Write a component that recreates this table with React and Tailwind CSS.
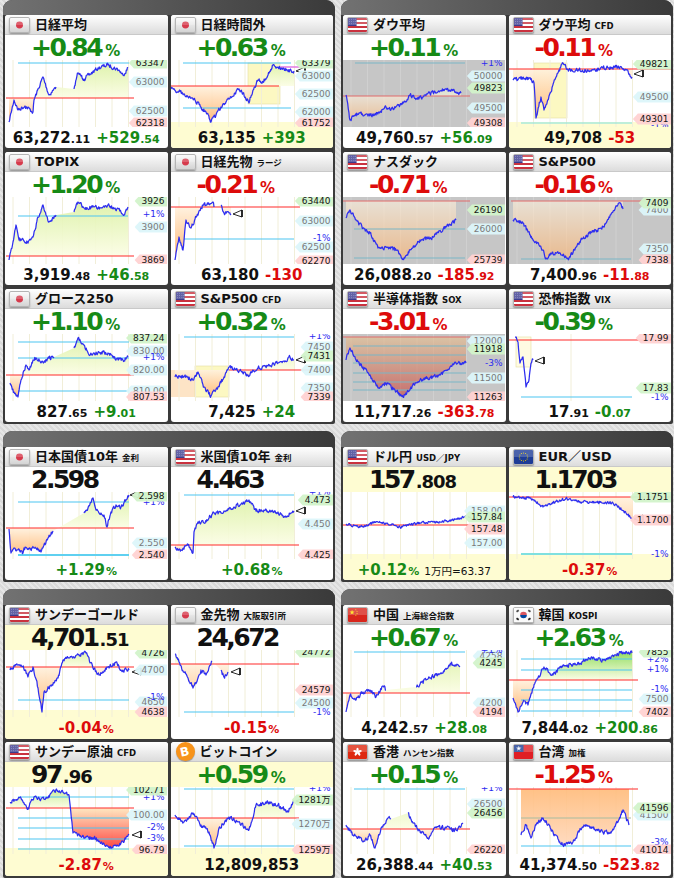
import React from "react"

const colOf = (c) => (c === "g" ? "text-[#168a16]" : c === "r" ? "text-[#dd0b0b]" : "text-[#111]")

function rng(seed) {
  let s = seed % 2147483647
  if (s <= 0) s += 2147483646
  return () => {
    s = (s * 16807) % 2147483647
    return (s - 1) / 2147483646
  }
}

// keypoints -> jagged price line
function buildSeries(line, amp, seed) {
  const r = rng(seed)
  let n = 0
  return line.map((seg) => {
    const out = []
    for (let i = 0; i < seg.length - 1; i++) {
      const [x0, y0] = seg[i]
      const [x1, y1] = seg[i + 1]
      const steps = Math.max(1, Math.ceil((x1 - x0) / 0.6))
      for (let k = 0; k < steps; k++) {
        const t = k / steps
        n = n * 0.35 + (r() - 0.5) * 2 * amp
        const y = y0 + (y1 - y0) * t + (k === 0 ? 0 : n)
        out.push([x0 + (x1 - x0) * t, Math.max(0.6, Math.min(66.4, y))])
      }
    }
    out.push(seg[seg.length - 1])
    return out
  })
}

const CW = { ".": 2.86, ",": 2.86, "%": 8.55, "+": 7.54, "-": 3.25, "万": 9 }
const textW = (t) => [...t].reduce((a, ch) => a + (CW[ch] ?? 5.72), 0)

function Label({ t, y, k }) {
  const right = 159.5
  if (k === "p")
    return (
      <text x={right} y={y + 3.2} textAnchor="end" fontSize="9" fill="#2b2bf0">
        {t}
      </text>
    )
  const L = right - textW(t) - 2
  const fillC = k === "h" ? "#d2f3ca" : k === "l" ? "#ffd2d2" : "#dcf5fa"
  return (
    <g>
      <polygon points={`${L - 5},${y} ${L},${y - 5.5} 162,${y - 5.5} 162,${y + 5.5} ${L},${y + 5.5}`} fill={fillC} opacity="0.95" />
      <text x={right} y={y + 3.2} textAnchor="end" fontSize="9" fill={k === "s" ? "#7a7a7a" : "#151515"}>
        {t}
      </text>
    </g>
  )
}

const ORDER = { s: 0, p: 1, h: 2, l: 3 }

function Chart({ ch, id }) {
  const W = 162
  const H = 67
  const segs = buildSeries(ch.line, ch.amp ?? 1.8, id * 131 + 7)
  const all = segs.flat()
  const ref = ch.red
  const x0 = all[0][0]
  const x1 = all[all.length - 1][0]
  const pts = all.map((p) => `${p[0].toFixed(1)},${p[1].toFixed(1)}`).join(" ")
  const fill = `${x0},${ref} ${pts} ${x1},${ref}`
  const gray = ch.gray
  const grid = ch.grid ?? [8, 24.5, 41, 57.5, 74, 90.5, 107, 123.5]
  const labels = [...ch.labels].sort((a, b) => ORDER[a[2]] - ORDER[b[2]])
  return (
    <svg className="block w-full h-[67px]" viewBox={`0 0 ${W} ${H}`} preserveAspectRatio="xMinYMin meet">
      <defs>
        <linearGradient id={`pg${id}`} gradientUnits="userSpaceOnUse" x1="0" y1={ref} x2="0" y2="0">
          <stop offset="0" stopColor={ch.posBot ?? "#fbfde4"} />
          <stop offset="1" stopColor={ch.posTop ?? "#d9f0a0"} />
        </linearGradient>
        <linearGradient id={`ng${id}`} gradientUnits="userSpaceOnUse" x1="0" y1={ref} x2="0" y2={H}>
          <stop offset="0" stopColor={ch.negTop ?? "#fff1dd"} />
          <stop offset="1" stopColor={ch.negBot ?? "#ffad62"} />
        </linearGradient>
        <clipPath id={`ca${id}`}>
          <rect x="0" y="0" width={W} height={ref} />
        </clipPath>
        <clipPath id={`cb${id}`}>
          <rect x="0" y={ref} width={W} height={H - ref} />
        </clipPath>
      </defs>
      {gray && <rect width={W} height={H} fill="#c6c6c6" />}
      {ch.yb && <rect y={ch.yb} width={W} height={H - ch.yb} fill="#fefcd2" />}
      {(ch.peach || []).map((r, i) => (
        <rect key={i} x={r[0]} y={r[1]} width={r[2]} height={r[3]} fill="#fde4c6" />
      ))}
      {(ch.rects || []).map((r, i) => (
        <rect key={i} x={r[0]} y={r[1]} width={r[2]} height={r[3]} fill={r[4] ?? "#fcf8c2"} stroke="#e4dea0" strokeWidth="0.6" />
      ))}
      {grid.map((x) => (
        <line key={x} x1={x} x2={x} y1="0" y2={H} stroke={gray ? "#d0d0d0" : "#f1eed8"} strokeWidth="1" />
      ))}
      {!ch.noFill && (
        <>
          <polygon points={fill} fill={`url(#pg${id})`} clipPath={`url(#ca${id})`} opacity={gray ? 0.55 : 0.92} />
          <polygon points={fill} fill={`url(#ng${id})`} clipPath={`url(#cb${id})`} opacity={gray ? 0.6 : 0.92} />
        </>
      )}
      {(ch.blues || []).map(([y, a, b, col, w], i) => (
        <line key={i} x1={a} x2={b} y1={y} y2={y} stroke={col ?? (gray ? "#7ab6c6" : "#4cc6f2")} strokeWidth={w ?? 1.1} />
      ))}
      {(ch.extra || []).map(([y, a, b, col], i) => (
        <line key={i} x1={a} x2={b} y1={y} y2={y} stroke={col} strokeWidth="1.4" />
      ))}
      <line x1={ch.redX[0]} x2={ch.redX[1]} y1={ref} y2={ref} stroke={gray ? "#e06a6a" : "#ff2a2a"} strokeWidth="1.2" />
      {segs.map((s, i) => (
        <polyline
          key={i}
          points={s.map((p) => `${p[0].toFixed(1)},${p[1].toFixed(1)}`).join(" ")}
          fill="none"
          stroke="#2e2ef0"
          strokeWidth="1.25"
          strokeLinejoin="round"
        />
      ))}
      {ch.marker && (
        <g>
          <path
            d={`M${ch.marker[0]} ${ch.marker[1]} L${ch.marker[0] + 9} ${ch.marker[1] - 4} L${ch.marker[0] + 9} ${ch.marker[1] + 3} Z`}
            fill="#fff"
            stroke="#111"
            strokeWidth="0.9"
          />
          <line x1={ch.marker[0] + 9} x2={ch.marker[0] + 9} y1={ch.marker[1] - 4} y2={ch.marker[1] + 3} stroke="#111" strokeWidth="1.6" />
        </g>
      )}
      {labels.map(([t, y, k], i) => (
        <Label key={i} t={t} y={y} k={k} />
      ))}
    </svg>
  )
}

function star(cx, cy, r, rot = 0) {
  const pts = []
  for (let i = 0; i < 10; i++) {
    const a = -Math.PI / 2 + rot + (i * Math.PI) / 5
    const rr = i % 2 === 0 ? r : r * 0.4
    pts.push(`${(cx + rr * Math.cos(a)).toFixed(2)},${(cy + rr * Math.sin(a)).toFixed(2)}`)
  }
  return pts.join(" ")
}

function FlagArt({ kind }) {
  if (kind === "jp") return <circle cx="10.5" cy="8" r="3.9" fill="#d63a4c" />
  if (kind === "us")
    return (
      <>
        <rect width="21" height="16" fill="#fff" />
        {[0, 2, 4, 6].map((i) => (
          <rect key={i} y={(i * 16) / 7} width="21" height={16 / 7} fill="#c9323f" />
        ))}
        <rect width="9.5" height={(16 / 7) * 4} fill="#3b3b8f" />
        {[1.5, 4, 6.5].map((y) =>
          [1.5, 4, 6.5, 8.5].map((x) => <circle key={`${x}-${y}`} cx={x} cy={y} r="0.55" fill="#9a9ad0" />)
        )}
      </>
    )
  if (kind === "eu")
    return (
      <>
        <rect width="21" height="16" fill="#1e3c96" />
        {Array.from({ length: 12 }, (_, i) => {
          const a = (i * Math.PI) / 6
          return <circle key={i} cx={10.5 + 4.6 * Math.cos(a)} cy={8 + 4.6 * Math.sin(a)} r="0.65" fill="#f0d000" />
        })}
      </>
    )
  if (kind === "cn")
    return (
      <>
        <rect width="21" height="16" fill="#d8261c" />
        <polygon points={star(4.5, 5, 3)} fill="#ffde00" />
        <polygon points={star(8.6, 2, 1)} fill="#ffde00" />
        <polygon points={star(10, 4, 1)} fill="#ffde00" />
        <polygon points={star(10, 6.4, 1)} fill="#ffde00" />
        <polygon points={star(8.6, 8.2, 1)} fill="#ffde00" />
      </>
    )
  if (kind === "kr")
    return (
      <>
        <rect width="21" height="16" fill="#fafafa" />
        <path d="M6.8 8 A3.7 3.7 0 0 1 14.2 8 Z" fill="#cd2e3a" />
        <path d="M6.8 8 A3.7 3.7 0 0 0 14.2 8 Z" fill="#0047a0" />
        <rect x="2.5" y="2.5" width="3" height="2" fill="#222" transform="rotate(-35 4 3.5)" />
        <rect x="15.5" y="2.5" width="3" height="2" fill="#222" transform="rotate(35 17 3.5)" />
        <rect x="2.5" y="11.5" width="3" height="2" fill="#222" transform="rotate(35 4 12.5)" />
        <rect x="15.5" y="11.5" width="3" height="2" fill="#222" transform="rotate(-35 17 12.5)" />
      </>
    )
  if (kind === "hk")
    return (
      <>
        <rect width="21" height="16" fill="#de2910" />
        {[0, 72, 144, 216, 288].map((a) => (
          <ellipse key={a} cx="10.5" cy="5.6" rx="1.3" ry="2.5" fill="#fff" transform={`rotate(${a} 10.5 8)`} />
        ))}
      </>
    )
  if (kind === "tw")
    return (
      <>
        <rect width="21" height="16" fill="#e01e24" />
        <rect width="10.5" height="8" fill="#1c3f94" />
        <polygon points={star(5.25, 4, 3.2)} fill="#fff" />
        <circle cx="5.25" cy="4" r="1.6" fill="#fff" stroke="#1c3f94" strokeWidth="0.4" />
      </>
    )
  return null
}

function Flag({ kind }) {
  if (kind === "btc")
    return (
      <div className="w-[19px] h-[19px] rounded-full bg-[#f7931a] flex items-center justify-center shadow-[0_1px_1px_rgba(0,0,0,0.3)] ml-[1px]">
        <span className="text-white text-[12px] font-bold leading-none -rotate-12">B</span>
      </div>
    )
  return (
    <div
      className={`relative w-[21px] h-[16px] rounded-[2px] overflow-hidden border border-[#b4b4b4] shadow-[0_1px_1.5px_rgba(0,0,0,0.35)] ${
        kind === "jp" ? "bg-gradient-to-b from-[#fafafa] to-[#d4d4d4]" : "bg-white"
      }`}
    >
      <svg viewBox="0 0 21 16" className="block w-full h-full" preserveAspectRatio="none">
        <FlagArt kind={kind} />
      </svg>
      <div className="absolute inset-x-0 top-0 h-1/2 bg-white/20" />
    </div>
  )
}

function Header({ flag, title, sub }) {
  return (
    <div className="h-[20px] shrink-0 flex items-center gap-[5px] pl-[4px] bg-gradient-to-b from-white to-[#dcdcdc] border-b border-[#c9c9c9]">
      <Flag kind={flag} />
      <div className="flex items-baseline">
        <span className="text-[13px] font-bold text-[#111] leading-none">{title}</span>
        {sub && <span className="text-[8.5px] font-bold text-[#111] leading-none ml-[4px]">{sub}</span>}
      </div>
    </div>
  )
}

function Big({ t, yellow }) {
  return (
    <div className={`h-[25px] shrink-0 pl-[26px] flex items-baseline font-bold ${colOf(t.c)} ${yellow ? "bg-[#fefcd2]" : ""}`}>
      <span className="text-[25px] leading-[25px] tracking-[-2.5px]">{t.v}</span>
      {t.d && <span className="text-[18px] leading-[25px] tracking-[-1px] ml-[2px]">{t.d}</span>}
      {t.u && <span className="text-[15px] leading-[25px] ml-[4px]">{t.u}</span>}
    </div>
  )
}

function Bottom({ items, yellow }) {
  return (
    <div className={`flex-1 flex items-center justify-center font-bold leading-none ${yellow ? "bg-[#fefcd2]" : ""}`}>
      <div className="flex items-baseline">
        {items.map((it, i) =>
          it.t ? (
            <span key={i} className="text-[10.5px] font-normal text-[#111] ml-[5px]">
              {it.t}
            </span>
          ) : (
            <span key={i} className={`${colOf(it.c)} ${i > 0 ? "ml-[6px]" : ""}`}>
              <span className="text-[15px]">{it.v}</span>
              {it.d && <span className="text-[11px]">{it.d}</span>}
              {it.u && <span className="text-[11px] ml-[1px]">{it.u}</span>}
            </span>
          )
        )}
      </div>
    </div>
  )
}

function Card({ c, id }) {
  return (
    <div className="bg-white rounded-[3px] overflow-hidden flex flex-col">
      <Header flag={c.flag} title={c.title} sub={c.sub} />
      <Big t={c.top} yellow={c.topY} />
      <Chart ch={c.ch} id={id} />
      <Bottom items={c.bot} yellow={!!c.ch.yb} />
    </div>
  )
}

const TOP_L = [
  {
    flag: "jp", title: "日経平均",
    top: { v: "+0.84", u: "%", c: "g" },
    bot: [{ v: "63,272", d: ".11" }, { v: "+529", d: ".54", c: "g" }],
    ch: {
      red: 38, redX: [1, 129], blues: [[3, 13, 124]],
      line: [
        [[4, 62], [9, 40], [13, 50], [20, 46], [28, 52], [29, 40], [38, 17], [44, 35], [51, 27]],
        [[69, 29], [73, 13], [79, 19], [93, 8], [103, 5], [114, 10], [118, 15], [123, 8]],
      ],
      labels: [["63347", 3, "h"], ["63000", 22, "s"], ["62500", 51, "s"], ["62318", 63, "l"]],
    },
  },
  {
    flag: "jp", title: "日経時間外",
    top: { v: "+0.63", u: "%", c: "g" },
    bot: [{ v: "63,135" }, { v: "+393", c: "g" }],
    ch: {
      yb: 62, rects: [[77, 3, 32, 41]], red: 26, redX: [0, 108],
      blues: [[3, 12, 120], [48, 12, 120]], extra: [[7, 109, 162, "#e27ae2"]],
      line: [[[0, 29], [8, 31], [17, 37], [24, 40], [30, 47], [35, 52], [40, 62], [45, 55], [50, 47], [55, 42], [60, 37], [68, 29], [72, 33], [78, 43], [82, 30], [87, 20], [92, 22], [97, 15], [102, 5], [106, 7], [110, 8], [116, 10], [123, 11]]],
      marker: [125, 11],
      labels: [["63379", 3, "h"], ["63000", 16, "s"], ["62500", 34, "s"], ["62000", 52, "s"], ["61752", 63, "l"]],
    },
  },
  {
    flag: "jp", title: "TOPIX",
    top: { v: "+1.20", u: "%", c: "g" },
    bot: [{ v: "3,919", d: ".48" }, { v: "+46", d: ".58", c: "g" }],
    ch: {
      red: 59, redX: [1, 129], blues: [[19, 13, 123]],
      line: [
        [[4, 63], [8, 45], [11, 28], [14, 43], [18, 42], [23, 46], [28, 40], [33, 20], [38, 8], [44, 25], [51, 18]],
        [[69, 15], [73, 5], [79, 11], [89, 10], [96, 11], [103, 8], [110, 11], [116, 15], [119, 18], [123, 10]],
      ],
      labels: [["3926", 4, "h"], ["+1%", 17, "p"], ["3900", 30, "s"], ["3869", 63, "l"]],
    },
  },
  {
    flag: "jp", title: "日経先物", sub: "ラージ",
    top: { v: "-0.21", u: "%", c: "r" },
    bot: [{ v: "63,180" }, { v: "-130", c: "r" }],
    ch: {
      red: 10, redX: [0, 129], blues: [[42, 13, 123]],
      line: [
        [[4, 63], [8, 40], [12, 53], [15, 23], [20, 31], [24, 22], [27, 18], [32, 8], [37, 7], [42, 5], [43, 10]],
        [[50, 8], [53, 16], [60, 17]],
      ],
      marker: [62, 17],
      labels: [["63440", 4, "h"], ["63000", 24, "s"], ["-1%", 41, "p"], ["62500", 50, "s"], ["62270", 64, "l"]],
    },
  },
  {
    flag: "jp", title: "グロース250",
    top: { v: "+1.10", u: "%", c: "g" },
    bot: [{ v: "827", d: ".65" }, { v: "+9", d: ".01", c: "g" }],
    ch: {
      red: 41, redX: [1, 129], blues: [[8, 13, 124], [24, 13, 124], [57, 13, 124]],
      line: [
        [[5, 49], [9, 58], [13, 63], [16, 46], [21, 31], [24, 36], [28, 26], [31, 24], [35, 27], [39, 28], [44, 24], [49, 23]],
        [[69, 14], [73, 4], [79, 11], [84, 21], [94, 18], [103, 19], [109, 24], [118, 26], [123, 23]],
      ],
      labels: [["830.00", 17, "s"], ["+1%", 23, "p"], ["837.24", 4, "h"], ["820.00", 36, "s"], ["810.00", 57, "s"], ["807.53", 63, "l"]],
    },
  },
  {
    flag: "us", title: "S&P500", sub: "CFD",
    top: { v: "+0.32", u: "%", c: "g" },
    bot: [{ v: "7,425" }, { v: "+24", c: "g" }],
    ch: {
      rects: [[24, 32, 34, 31]], peach: [[0, 36, 24, 27]], red: 36, redX: [58, 162], blues: [[3, 13, 123]],
      line: [[[4, 43], [10, 42], [17, 43], [22, 46], [27, 38], [33, 53], [40, 62], [47, 53], [53, 43], [58, 33], [64, 35], [70, 37], [77, 41], [87, 34], [97, 32], [107, 29], [113, 27], [119, 23], [123, 26]]],
      marker: [125, 26],
      labels: [["+1%", 2, "p"], ["7450", 13, "s"], ["7431", 22, "h"], ["7400", 36, "s"], ["7350", 54, "s"], ["7339", 63, "l"]],
    },
  },
]

const TOP_R = [
  {
    flag: "us", title: "ダウ平均",
    top: { v: "+0.11", u: "%", c: "g" },
    bot: [{ v: "49,760", d: ".57" }, { v: "+56", d: ".09", c: "g" }],
    ch: {
      gray: true, red: 36, redX: [0, 127], blues: [[3, 12, 122]],
      line: [[[3, 35], [7, 60], [12, 55], [17, 53], [25, 56], [33, 55], [43, 47], [50, 49], [57, 45], [62, 42], [67, 35], [74, 38], [80, 37], [90, 32], [97, 31], [103, 29], [108, 31], [113, 32], [118, 33]]],
      labels: [["+1%", 3, "p"], ["50000", 16, "s"], ["49823", 28, "h"], ["49500", 48, "s"], ["49308", 63, "l"]],
    },
  },
  {
    flag: "us", title: "ダウ平均", sub: "CFD",
    top: { v: "-0.11", u: "%", c: "r" },
    bot: [{ v: "49,708" }, { v: "-53", c: "r" }],
    ch: {
      yb: 62, rects: [[25, 3, 33, 55]], red: 9, redX: [0, 162], blues: [[63, 12, 123, "#7fe0e0"]],
      line: [[[4, 20], [12, 19], [20, 18], [25, 23], [27, 58], [32, 37], [35, 50], [40, 36], [42, 32], [47, 17], [50, 10], [54, 3], [60, 10], [70, 10], [80, 11], [94, 8], [107, 7], [117, 10], [123, 17]]],
      marker: [125, 14],
      labels: [["49821", 4, "h"], ["49500", 37, "s"], ["49301", 59, "l"], ["-1%", 65, "p"]],
    },
  },
  {
    flag: "us", title: "ナスダック",
    top: { v: "-0.71", u: "%", c: "r" },
    bot: [{ v: "26,088", d: ".20" }, { v: "-185", d: ".92", c: "r" }],
    ch: {
      gray: true, red: 4, redX: [0, 127], blues: [[32, 11, 122], [61, 11, 122]],
      line: [[[3, 21], [7, 13], [13, 23], [20, 31], [27, 36], [35, 51], [45, 50], [53, 53], [60, 62], [67, 53], [77, 43], [90, 40], [103, 30], [113, 23]]],
      labels: [["26190", 13, "h"], ["26000", 32, "s"], ["25739", 63, "l"]],
    },
  },
  {
    flag: "us", title: "S&P500",
    top: { v: "-0.16", u: "%", c: "r" },
    bot: [{ v: "7,400", d: ".96" }, { v: "-11", d: ".88", c: "r" }],
    ch: {
      gray: true, red: 4, redX: [2, 162], blues: [[62, 12, 122]],
      line: [[[4, 23], [9, 24], [14, 26], [19, 35], [24, 43], [30, 48], [34, 53], [37, 61], [42, 57], [47, 56], [53, 58], [60, 61], [67, 50], [74, 41], [84, 35], [94, 30], [100, 20], [106, 12], [110, 6], [114, 12]]],
      labels: [["7400", 13, "s"], ["7409", 6, "h"], ["7350", 52, "s"], ["7338", 63, "l"]],
    },
  },
  {
    flag: "us", title: "半導体指数", sub: "SOX",
    top: { v: "-3.01", u: "%", c: "r" },
    bot: [{ v: "11,717", d: ".26" }, { v: "-363", d: ".78", c: "r" }],
    ch: {
      gray: true, red: 3, redX: [0, 127],
      blues: [[12, 10, 123], [21, 10, 123], [29, 10, 123], [39, 10, 123], [48, 10, 123], [56, 10, 123]],
      negTop: "#e6c08e", negBot: "#c42e2e",
      line: [[[3, 26], [7, 14], [13, 26], [20, 33], [27, 41], [35, 54], [43, 49], [52, 56], [60, 63], [68, 53], [77, 46], [90, 43], [97, 41], [107, 33], [113, 29], [123, 29]]],
      labels: [["12000", 7, "s"], ["11918", 15, "h"], ["-3%", 29, "p"], ["11500", 44, "s"], ["11263", 63, "l"]],
    },
  },
  {
    flag: "us", title: "恐怖指数", sub: "VIX",
    top: { v: "-0.39", u: "%", c: "g" },
    bot: [{ v: "17", d: ".91" }, { v: "-0", d: ".07", c: "g" }],
    ch: {
      rects: [[7, 3, 15, 30, "#fffbe2"]], grid: [62], noFill: true, red: 6, redX: [0, 162], blues: [[63, 12, 123]],
      line: [[[6, 3], [9, 8], [11, 29], [14, 23], [17, 53], [20, 46], [22, 29], [24, 26]]],
      marker: [26, 27],
      labels: [["17.99", 4, "l"], ["17.83", 54, "h"], ["-1%", 63, "p"]],
    },
  },
]

const MID_L = [
  {
    flag: "jp", title: "日本国債10年", sub: "金利",
    top: { v: "2.598", c: "k" },
    bot: [{ v: "+1.29", u: "%", c: "g" }],
    ch: {
      red: 36, redX: [1, 129], blues: [[10, 13, 124], [63, 13, 124, "#5fd0f0", 2]],
      line: [
        [[4, 37], [6, 61], [9, 56], [13, 58], [18, 61], [19, 56], [24, 57], [29, 56], [33, 58], [36, 60], [43, 46], [48, 39]],
        [[79, 21], [83, 16], [88, 6], [91, 18], [96, 21], [99, 23], [102, 35], [106, 20], [111, 13], [116, 15], [121, 8], [124, 3]],
      ],
      marker: [125, 3],
      labels: [["+1%", 10, "p"], ["2.598", 4, "h"], ["2.550", 51, "s"], ["2.540", 63, "l"]],
    },
  },
  {
    flag: "us", title: "米国債10年", sub: "金利",
    top: { v: "4.463", c: "k" },
    bot: [{ v: "+0.68", u: "%", c: "g" }],
    ch: {
      red: 53, redX: [0, 128], blues: [[3, 13, 123]],
      line: [[[4, 55], [10, 58], [17, 53], [20, 58], [22, 61], [23, 40], [27, 30], [33, 31], [38, 26], [43, 21], [50, 21], [56, 18], [63, 15], [70, 12], [78, 8], [85, 19], [93, 18], [100, 19], [107, 20], [113, 25], [120, 21], [123, 19]]],
      marker: [125, 19],
      labels: [["+1%", 0, "p"], ["4.473", 8, "h"], ["4.450", 32, "s"], ["4.425", 63, "l"]],
    },
  },
]

const MID_R = [
  {
    flag: "us", title: "ドル円", sub: "USD／JPY", topY: true,
    top: { v: "157", d: ".808", c: "k" },
    bot: [{ v: "+0.12", u: "%", c: "g" }, { t: "1万円=63.37" }],
    ch: {
      yb: 62, red: 33, redX: [0, 127], amp: 1.2,
      line: [[[3, 32], [17, 35], [33, 30], [45, 32], [57, 35], [68, 33], [77, 31], [90, 30], [103, 29], [110, 28], [117, 26], [123, 24]]],
      marker: [125, 25],
      labels: [["158.00", 19, "s"], ["157.84", 25, "h"], ["157.48", 37, "l"], ["157.00", 51, "s"]],
    },
  },
  {
    flag: "eu", title: "EUR／USD", topY: true,
    top: { v: "1.1703", c: "k" },
    bot: [{ v: "-0.37", u: "%", c: "r" }],
    ch: {
      yb: 62, red: 5, redX: [0, 162], blues: [[62, 12, 123, "#7fe0e0", 2]], amp: 1.3,
      line: [[[4, 5], [20, 6], [27, 10], [34, 15], [44, 11], [57, 6], [70, 10], [87, 10], [104, 11], [110, 15], [117, 21], [124, 27]]],
      marker: [125, 27],
      labels: [["1.1751", 5, "h"], ["1.1700", 28, "l"], ["-1%", 62, "p"]],
    },
  },
]

const BOT_L = [
  {
    flag: "us", title: "サンデーゴールド", topY: true,
    top: { v: "4,701", d: ".51", c: "k" },
    bot: [{ v: "-0.04", u: "%", c: "r" }],
    ch: {
      yb: 60, red: 17, redX: [1, 129], blues: [[50, 13, 124]],
      line: [[[5, 20], [10, 16], [16, 15], [20, 20], [23, 27], [28, 17], [33, 38], [37, 62], [39, 42], [46, 35], [53, 28], [58, 10], [63, 8], [69, 7], [75, 5], [81, 3], [88, 18], [94, 25], [103, 17], [111, 12], [116, 20], [124, 20]]],
      marker: [127, 22],
      labels: [["4726", 3, "h"], ["4700", 20, "s"], ["-1%", 47, "p"], ["4650", 52, "s"], ["4638", 62, "l"]],
    },
  },
  {
    flag: "jp", title: "金先物", sub: "大阪取引所",
    top: { v: "24,672", c: "k" },
    bot: [{ v: "-0.15", u: "%", c: "r" }],
    ch: {
      red: 14, redX: [0, 128], blues: [[62, 13, 123]],
      line: [
        [[4, 4], [8, 12], [13, 22], [17, 28], [22, 38], [27, 28], [30, 20], [35, 25], [41, 11]],
        [[50, 20], [53, 27], [57, 22]],
      ],
      marker: [60, 22],
      labels: [["24772", 2, "h"], ["24579", 40, "l"], ["24500", 53, "s"], ["-1%", 62, "p"]],
    },
  },
  {
    flag: "us", title: "サンデー原油", sub: "CFD", topY: true,
    top: { v: "97", d: ".96", c: "k" },
    bot: [{ v: "-2.87", u: "%", c: "r" }],
    ch: {
      yb: 61, red: 21, redX: [1, 129],
      blues: [[10, 13, 124], [31, 13, 124], [41, 13, 124], [52, 13, 124], [62, 13, 124]],
      negTop: "#ffe6bc", negBot: "#ff2020", posTop: "#bfe98a",
      line: [[[5, 16], [10, 13], [16, 11], [23, 21], [29, 10], [36, 12], [43, 11], [49, 3], [55, 5], [61, 6], [64, 8], [68, 46], [76, 50], [89, 51], [96, 56], [106, 61], [116, 56], [124, 48]]],
      marker: [127, 48],
      labels: [["102.71", 3, "h"], ["+1%", 10, "p"], ["100.00", 28, "s"], ["-2%", 40, "p"], ["-3%", 51, "p"], ["96.79", 63, "l"]],
    },
  },
  {
    flag: "btc", title: "ビットコイン", topY: true,
    top: { v: "+0.59", u: "%", c: "g" },
    bot: [{ v: "12,809,853" }],
    ch: {
      yb: 61, red: 31, redX: [0, 128], blues: [[2, 13, 123], [59, 13, 123]],
      line: [[[4, 28], [13, 35], [22, 26], [30, 38], [38, 45], [43, 61], [48, 41], [58, 30], [67, 35], [78, 43], [85, 18], [97, 16], [107, 18], [117, 25], [123, 13]]],
      marker: [125, 14],
      labels: [["+1%", 1, "p"], ["1281万", 13, "h"], ["1270万", 37, "s"], ["1259万", 63, "l"]],
    },
  },
]

const BOT_R = [
  {
    flag: "cn", title: "中国", sub: "上海総合指数",
    top: { v: "+0.67", u: "%", c: "g" },
    bot: [{ v: "4,242", d: ".57" }, { v: "+28", d: ".08", c: "g" }],
    ch: {
      red: 43, redX: [0, 127], blues: [[2, 11, 122]],
      line: [
        [[3, 62], [7, 45], [13, 50], [20, 42], [27, 40], [33, 47], [40, 36], [43, 40]],
        [[73, 37], [83, 30], [93, 25], [100, 23], [108, 14], [117, 16]],
      ],
      labels: [["+1%", 0, "p"], ["4258", 6, "s"], ["4245", 13, "h"], ["4200", 53, "s"], ["4194", 62, "l"]],
    },
  },
  {
    flag: "kr", title: "韓国", sub: "KOSPI",
    top: { v: "+2.63", u: "%", c: "g" },
    bot: [{ v: "7,844", d: ".02" }, { v: "+200", d: ".86", c: "g" }],
    ch: {
      red: 30, redX: [0, 129], blues: [[9, 12, 123], [20, 12, 123], [40, 12, 123], [50, 12, 123], [61, 12, 123]],
      posTop: "#82d84a",
      line: [[[4, 48], [9, 62], [14, 52], [19, 55], [24, 38], [29, 28], [35, 17], [44, 25], [54, 15], [67, 15], [80, 8], [94, 10], [107, 5], [114, 2], [123, 3]]],
      labels: [["7855", 2, "h"], ["+2%", 9, "p"], ["+1%", 19, "p"], ["-1%", 39, "p"], ["7500", 49, "s"], ["7402", 62, "l"]],
    },
  },
  {
    flag: "hk", title: "香港", sub: "ハンセン指数",
    top: { v: "+0.15", u: "%", c: "g" },
    bot: [{ v: "26,388", d: ".44" }, { v: "+40", d: ".53", c: "g" }],
    ch: {
      red: 42, redX: [0, 127], blues: [[2, 11, 122]],
      line: [
        [[3, 38], [10, 48], [15, 50], [20, 55], [27, 48], [32, 61], [38, 41], [45, 31], [48, 32]],
        [[65, 26], [70, 36], [78, 45], [85, 51], [93, 40], [103, 41], [113, 43], [120, 36]],
      ],
      labels: [["+1%", 1, "p"], ["26500", 17, "s"], ["26456", 26, "h"], ["26220", 63, "l"]],
    },
  },
  {
    flag: "tw", title: "台湾", sub: "加権",
    top: { v: "-1.25", u: "%", c: "r" },
    bot: [{ v: "41,374", d: ".50" }, { v: "-523", d: ".82", c: "r" }],
    ch: {
      red: 2, redX: [0, 129], blues: [[31, 12, 122, "#a8bca0"], [59, 12, 122]],
      negTop: "#ffbc7c", negBot: "#ffdcc4",
      line: [[[12, 48], [17, 38], [22, 51], [27, 38], [34, 31], [39, 38], [44, 45], [49, 52], [54, 58], [59, 56], [64, 55], [70, 45], [75, 38], [84, 41], [94, 45], [102, 46], [109, 35], [114, 23], [117, 30], [120, 38]]],
      labels: [["41500", 28, "s"], ["41596", 21, "h"], ["-3%", 55, "p"], ["41014", 63, "l"]],
    },
  },
]

const SIZES = {
  top: { head: "h-[15px]", grid: "grid grid-cols-2 grid-rows-[133px_133px_133px] gap-x-[3px] gap-y-[4px] px-[2px] pb-[2px]" },
  mid: { head: "h-[16px]", grid: "grid grid-cols-2 grid-rows-[133px] gap-x-[3px] px-[2px] pb-[2px]" },
  bot: { head: "h-[16px]", grid: "grid grid-cols-2 grid-rows-[134px_134px] gap-x-[3px] gap-y-[3px] px-[2px] pb-[2px]" },
}

function Panel({ cards, size, base }) {
  const s = SIZES[size]
  return (
    <div className="rounded-t-[9px] rounded-b-[2px] overflow-hidden bg-[#3a3a3a]">
      <div className={`${s.head} bg-gradient-to-r from-[#727272] to-[#3a3a3a]`} />
      <div className={s.grid}>
        {cards.map((c, i) => (
          <Card key={i} c={c} id={base + i} />
        ))}
      </div>
    </div>
  )
}

export default function App() {
  return (
    <div className="w-[674px] h-[878px] overflow-hidden pl-[3px] bg-[repeating-linear-gradient(45deg,#e6e6e6_0px,#e6e6e6_2px,#d9d9d9_2px,#d9d9d9_4px)] font-['DejaVu_Sans','Noto_Sans_CJK_JP',sans-serif]">
      <div className="grid grid-cols-[332px_332px] gap-x-[6px]">
        <div className="flex flex-col gap-y-[7px]">
          <Panel cards={TOP_L} size="top" base={0} />
          <Panel cards={MID_L} size="mid" base={20} />
          <Panel cards={BOT_L} size="bot" base={40} />
        </div>
        <div className="flex flex-col gap-y-[7px]">
          <Panel cards={TOP_R} size="top" base={10} />
          <Panel cards={MID_R} size="mid" base={30} />
          <Panel cards={BOT_R} size="bot" base={50} />
        </div>
      </div>
    </div>
  )
}
